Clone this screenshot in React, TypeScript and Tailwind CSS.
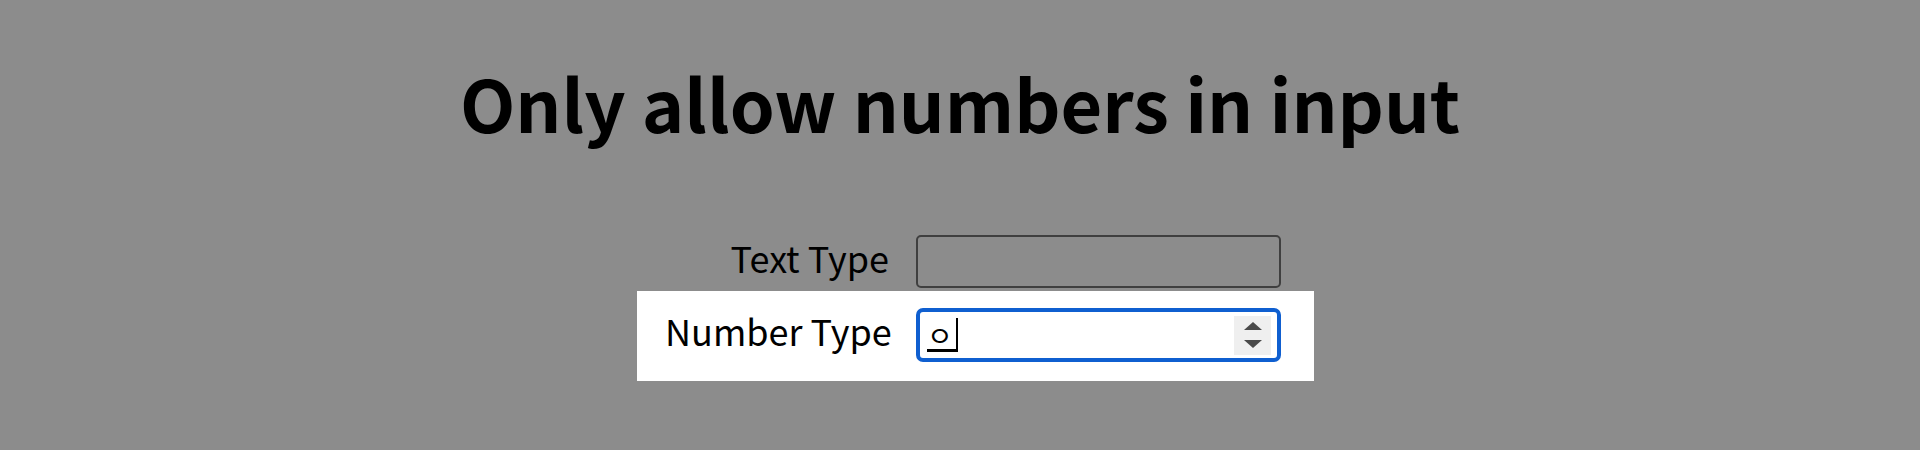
import React from "react";

export default function App() {
  return (
    <div className="min-h-[450px] bg-[#8c8c8c] text-black font-['Noto_Sans_CJK_KR','Noto_Sans',sans-serif]">
      <h1 className="pt-[66px] text-center text-[72px] font-bold leading-none">
        Only allow numbers in input
      </h1>
      <div className="mt-[97px] flex flex-col items-center pl-[31px]">
        <div className="flex items-center pl-[28px] pr-[33px]">
          <label className="mb-[10px] mr-[27px] w-[224px] whitespace-nowrap text-right text-[36px] leading-none">Text Type</label>
          <input
            type="text"
            className="h-[53px] w-[365px] rounded-[5px] border-2 border-[#3f3f3f] bg-transparent outline-none"
          />
        </div>
        <div className="mt-[3px] flex items-center bg-white pb-[19px] pl-[28px] pr-[33px] pt-[17px]">
          <label className="mb-[10px] mr-[27px] w-[224px] whitespace-nowrap text-right text-[36px] leading-none">Number Type</label>
          <div className="flex h-[54px] w-[365px] items-center rounded-[7px] border-4 border-[#0f5fd0] bg-white pl-[7px] pr-[6px]">
            <span className="mt-[2px] border-b-[3px] border-black pr-[3px] text-[28px] leading-[28px]">ㅇ</span>
            <span className="h-[34px] w-[2px] bg-black" />
            <div className="ml-auto flex h-[39px] w-[37px] flex-col items-center justify-center gap-[10px] bg-[#efefef]">
              <svg width="18" height="8" viewBox="0 0 18 8">
                <polygon points="9,0 18,8 0,8" fill="#4a4a4a" />
              </svg>
              <svg width="18" height="8" viewBox="0 0 18 8">
                <polygon points="0,0 18,0 9,8" fill="#4a4a4a" />
              </svg>
            </div>
          </div>
        </div>
      </div>
    </div>
  );
}
